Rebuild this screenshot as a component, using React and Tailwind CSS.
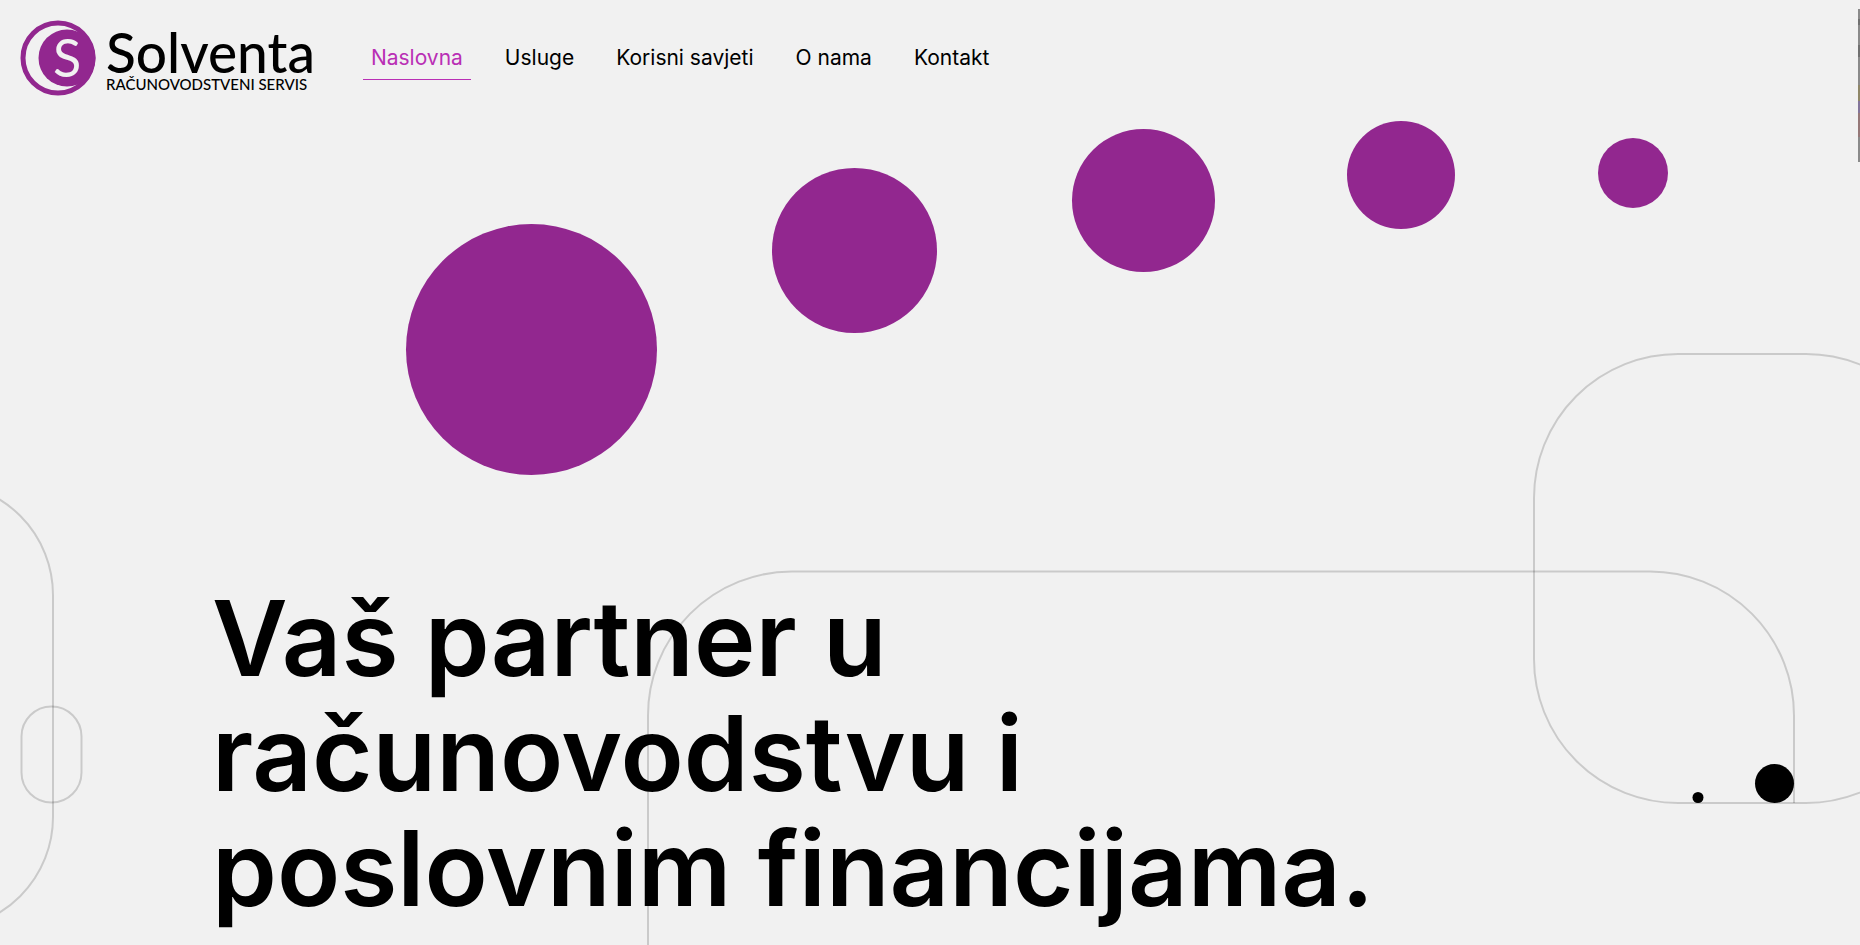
const navLinks = [
  { label: 'Naslovna', href: '#naslovna', active: true },
  { label: 'Usluge', href: '#usluge' },
  { label: 'Korisni savjeti', href: '#savjeti' },
  { label: 'O nama', href: '#o-nama' },
  { label: 'Kontakt', href: '#kontakt' },
];

const dots = [
  { cx: 531.5, cy: 349.5, r: 125.5 },
  { cx: 854.5, cy: 250.5, r: 82.5 },
  { cx: 1143.5, cy: 200.5, r: 71.5 },
  { cx: 1401, cy: 175, r: 54 },
  { cx: 1633, cy: 173, r: 35 },
];

const Logo = () => (
  <a href="#naslovna" className="flex items-center gap-2.5 text-black font-['Lato',sans-serif]">
    <svg viewBox="0 0 76 76" className="w-19 h-19" aria-hidden="true">
      <circle cx="38" cy="38" r="35" fill="none" stroke="#92278f" strokeWidth="5" />
      <circle cx="47" cy="38" r="28.5" fill="#92278f" />
      <text x="47" y="56.5" textAnchor="middle" fontSize="52" fill="#f1f1f1">S</text>
    </svg>
    <span className="flex flex-col pt-1.5">
      <span className="text-[55px] leading-[46px] font-medium">Solventa</span>
      <span className="text-[15px] leading-[18px] font-medium whitespace-nowrap">RAČUNOVODSTVENI SERVIS</span>
    </span>
  </a>
);

const Header = () => (
  <header className="relative flex items-center gap-12 px-5 pt-5">
    <Logo />
    <nav className="flex gap-[26px]">
      {navLinks.map((link) => (
        <a
          key={link.label}
          href={link.href}
          className={`px-2 py-2 text-[21px] leading-[26px] border-b whitespace-nowrap ${
            link.active ? 'text-[#b92fb5] border-[#b92fb5]' : 'text-black border-transparent'
          }`}
        >
          {link.label}
        </a>
      ))}
    </nav>
  </header>
);

const Background = () => (
  <svg
    viewBox="0 0 1860 945"
    preserveAspectRatio="xMidYMin slice"
    className="absolute inset-0 w-full h-full"
    aria-hidden="true"
  >
    <g fill="#92278f">
      {dots.map((dot) => (
        <circle key={dot.cx} {...dot} />
      ))}
    </g>
    {/* Rounded outlines */}
    <g fill="none" stroke="#000" strokeOpacity="0.16" strokeWidth="2">
      <path d="M-59 483 A112 112 0 0 1 53 595 V817 A112 112 0 0 1 -59 929" />
      <rect x="21.5" y="706.5" width="60" height="96" rx="30" />
      <rect x="1534" y="354" width="416" height="449" rx="144" />
      <path d="M648 960 V716 A144 144 0 0 1 792 571.5 H1650 A144 144 0 0 1 1794 716 V803" />
    </g>
    <circle cx="1698" cy="797.5" r="5.5" />
    <circle cx="1774.5" cy="783.5" r="19.5" />
  </svg>
);

const App = () => {
  return (
    <div className="relative min-h-screen overflow-hidden bg-[#f1f1f1] text-black font-['Inter',sans-serif]">
      <Background />
      {/* Edge of the next slide */}
      <div className="absolute right-0 top-[9px] w-0.5 h-[153px] flex flex-col bg-[#8a8a8a]">
        <div className="mt-2.5 h-1.5 bg-[#707070]"></div>
        <div className="mt-5 h-3 bg-[#707070]"></div>
        <div className="mt-7 h-4 bg-[#8f8768]"></div>
        <div className="h-3 bg-[#83759a]"></div>
        <div className="h-6 bg-[#957878]"></div>
      </div>
      <Header />
      <main className="relative px-[212px] pt-[485px]">
        <h1 className="text-[104px] leading-[115px] font-semibold">
          Vaš partner u
          <br />
          računovodstvu i
          <br />
          poslovnim financijama.
        </h1>
      </main>
    </div>
  );
};

export default App;
